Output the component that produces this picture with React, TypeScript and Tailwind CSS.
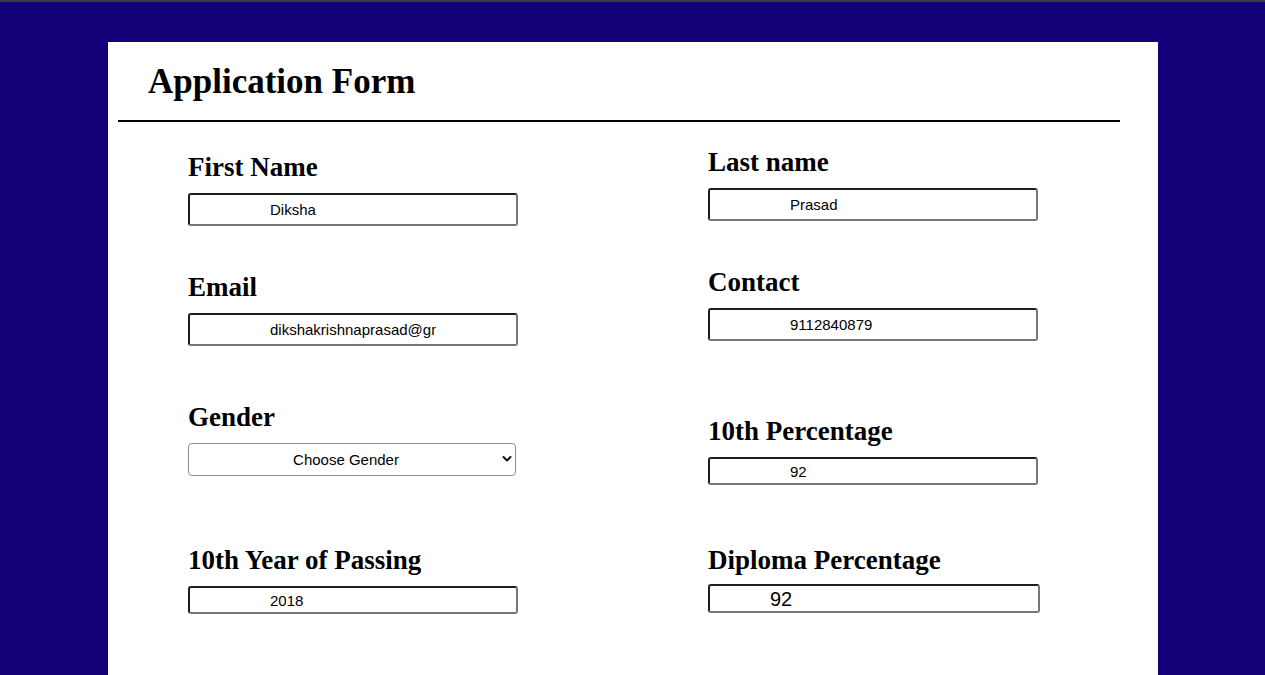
import React from "react";

const inputBase =
  "block w-[330px] border-2 border-t-[#1f1f1f] border-l-[#1f1f1f] border-b-[#777777] border-r-[#777777] rounded-[3px] bg-white text-black outline-none font-['Liberation_Sans',Arial,sans-serif]";

type FieldProps = {
  label: string;
  value: string;
  className?: string;
  inputClass?: string;
};

const Field = ({ label, value, className = "", inputClass = "" }: FieldProps) => {
  return (
    <div className={className}>
      <label className="block text-[27px] leading-[31px] font-bold text-black">{label}</label>
      <input
        type="text"
        defaultValue={value}
        className={`${inputBase} mt-[10px] ${inputClass}`}
      />
    </div>
  );
};

const App = () => {
  return (
    <div className="h-[675px] overflow-hidden bg-[#120079] font-['Liberation_Serif','Times_New_Roman',serif]">
      <div className="h-[2px] bg-[#3a3a3a]" />
      <div className="ml-[108px] mt-[40px] h-[633px] w-[1050px] bg-white pt-[20px]">
        <h1 className="pl-[40px] text-[35px] leading-[40px] font-bold text-black">Application Form</h1>
        <div className="ml-[10px] mt-[18px] h-[2px] w-[1002px] bg-black" />

        <div className="flex pl-[80px]">
          {/* left column */}
          <div className="w-[520px] pt-[30px]">
            <Field label="First Name" value="Diksha" inputClass="h-[33px] px-[80px] text-[15px]" />
            <Field
              label="Email"
              value="dikshakrishnaprasad@gmail.com"
              className="mt-[46px]"
              inputClass="h-[33px] px-[80px] text-[15px]"
            />
            <div className="mt-[56px]">
              <label className="block text-[27px] leading-[31px] font-bold text-black">Gender</label>
              <div className="relative mt-[10px] w-[328px]">
                <select
                  defaultValue=""
                  className="block h-[33px] w-full appearance-none rounded-[4px] border border-[#8a8a8a] bg-white pt-[1px] pl-[2px] pr-[14px] text-center text-[15px] text-black outline-none font-['Liberation_Sans',Arial,sans-serif]"
                >
                  <option value="">Choose Gender</option>
                  <option value="female">Female</option>
                  <option value="male">Male</option>
                  <option value="other">Other</option>
                </select>
                <svg
                  className="pointer-events-none absolute right-[4px] top-[12px]"
                  width="10"
                  height="8"
                  viewBox="0 0 10 8"
                  fill="none"
                >
                  <path d="M1.5 2 L5 5.5 L8.5 2" stroke="#111" strokeWidth="2" strokeLinecap="round" strokeLinejoin="round" />
                </svg>
              </div>
            </div>
            <Field
              label="10th Year of Passing"
              value="2018"
              className="mt-[69px]"
              inputClass="h-[28px] px-[80px] text-[15px]"
            />
          </div>

          {/* right column */}
          <div className="pt-[25px]">
            <Field label="Last name" value="Prasad" inputClass="h-[33px] px-[80px] text-[15px]" />
            <Field
              label="Contact"
              value="9112840879"
              className="mt-[46px]"
              inputClass="h-[33px] px-[80px] text-[15px]"
            />
            <Field
              label="10th Percentage"
              value="92"
              className="mt-[75px]"
              inputClass="h-[28px] px-[80px] text-[15px]"
            />
            <div className="mt-[60px]">
              <label className="block text-[27px] leading-[31px] font-bold text-black">Diploma Percentage</label>
              <input
                type="text"
                defaultValue="92"
                className={`${inputBase} mt-[8px] h-[29px] w-[332px] pl-[60px] text-[20px]`}
              />
            </div>
          </div>
        </div>
      </div>
    </div>
  );
};

export default App;
